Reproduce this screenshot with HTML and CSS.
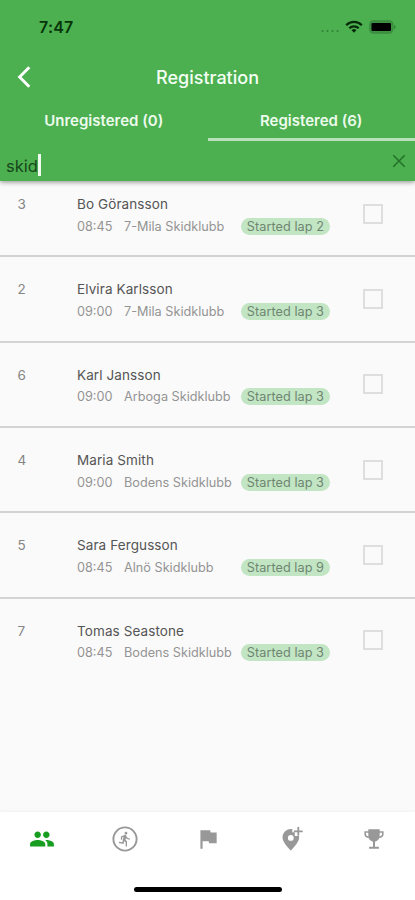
FILE: index.html
```html
<!DOCTYPE html>
<html lang="en">
<head>
<meta charset="utf-8">
<title>Registration</title>
<link rel="stylesheet" href="styles.css">
</head>
<body>
<div class="app">
  <header class="header">
    <div class="status">
      <span class="time">7:47</span>
      <div class="status-icons">
        <svg class="dots" width="20" height="4" viewBox="0 0 20 4"><g fill="#2f8035"><circle cx="2.5" cy="2" r="1"/><circle cx="7.5" cy="2" r="1"/><circle cx="12.5" cy="2" r="1"/><circle cx="17.5" cy="2" r="1"/></g></svg>
        <svg class="wifi" width="18" height="13" viewBox="0 0 18 13"><g fill="none" stroke="#062b09" stroke-width="2.3"><path d="M1.2 5.2a11 11 0 0 1 15.6 0"/><path d="M4.3 8.3a6.6 6.6 0 0 1 9.4 0"/></g><path d="M9 12.7 6.6 10.3a3.4 3.4 0 0 1 4.8 0z" fill="#062b09"/></svg>
        <svg class="battery" width="27" height="14" viewBox="0 0 27 14"><rect x=".8" y=".8" width="23" height="12.4" rx="3.6" fill="#3f9344" stroke="#3a8c3f" stroke-width="1.2"/><rect x="2.5" y="3" width="19.5" height="8" rx="1" fill="#000"/><path d="M25 4.8q1.6.7 1.6 2.2T25 9.2z" fill="#328238"/></svg>
      </div>
    </div>
    <div class="titlebar">
      <svg class="back" width="15" height="22" viewBox="0 0 15 22"><path d="M12.3 1.300 2.600 11l9.700 9.700" fill="none" stroke="#fff" stroke-width="2.9"/></svg>
      <h1 class="title">Registration</h1>
    </div>
    <nav class="tabs">
      <div class="tab"><span>Unregistered (0)</span></div>
      <div class="tab active"><span>Registered (6)</span></div>
    </nav>
    <div class="search">
      <span class="query">skid</span><i class="caret"></i>
      <svg class="clear" width="14" height="14" viewBox="0 0 14 14"><path d="m1.3 1.3 11.4 11.4M12.7 1.3 1.3 12.7" stroke="#237329" stroke-width="1.6"/></svg>
    </div>
  </header>
  <main class="list">
    <article class="row"><span class="num">3</span><div class="info"><div class="name">Bo Göransson</div><div class="meta"><span class="start">08:45</span><span class="club">7-Mila Skidklubb</span><span class="badge">Started lap 2</span></div></div><i class="check"></i></article>
    <article class="row"><span class="num">2</span><div class="info"><div class="name">Elvira Karlsson</div><div class="meta"><span class="start">09:00</span><span class="club">7-Mila Skidklubb</span><span class="badge">Started lap 3</span></div></div><i class="check"></i></article>
    <article class="row"><span class="num">6</span><div class="info"><div class="name">Karl Jansson</div><div class="meta"><span class="start">09:00</span><span class="club">Arboga Skidklubb</span><span class="badge">Started lap 3</span></div></div><i class="check"></i></article>
    <article class="row"><span class="num">4</span><div class="info"><div class="name">Maria Smith</div><div class="meta"><span class="start">09:00</span><span class="club">Bodens Skidklubb</span><span class="badge">Started lap 3</span></div></div><i class="check"></i></article>
    <article class="row"><span class="num">5</span><div class="info"><div class="name">Sara Fergusson</div><div class="meta"><span class="start">08:45</span><span class="club">Alnö Skidklubb</span><span class="badge">Started lap 9</span></div></div><i class="check"></i></article>
    <article class="row"><span class="num">7</span><div class="info"><div class="name">Tomas Seastone</div><div class="meta"><span class="start">08:45</span><span class="club">Bodens Skidklubb</span><span class="badge">Started lap 3</span></div></div><i class="check"></i></article>
  </main>
  <footer class="bottom">
    <nav class="nav">
      <div class="item current"><svg width="26" height="26" viewBox="0 0 24 24" fill="currentColor"><path d="M16 11c1.66 0 2.99-1.34 2.99-3S17.66 5 16 5s-3 1.34-3 3 1.34 3 3 3zm-8 0c1.66 0 2.99-1.34 2.99-3S9.66 5 8 5 5 6.34 5 8s1.340 3 3 3zm0 2c-2.330 0-7 1.170-7 3.500V19h14v-2.500c0-2.330-4.670-3.500-7-3.500zm8 0c-.29 0-.62.02-.97.05 1.160.84 1.970 1.970 1.970 3.450V19h6v-2.500c0-2.330-4.670-3.500-7-3.500z"/></svg></div>
      <div class="item"><svg width="26" height="26" viewBox="0 0 26 26"><circle cx="13" cy="13" r="11.6" fill="none" stroke="currentColor" stroke-width="1.9"/><g transform="translate(4.8 4.8) scale(.68)" fill="currentColor"><path d="M13.490 5.480c1.100 0 2-.9 2-2s-.9-2-2-2-2 .9-2 2 .9 2 2 2zm-3.600 13.900 1-4.400 2.100 2v6h2v-7.500l-2.100-2 .6-3c1.300 1.500 3.300 2.500 5.500 2.500v-2c-1.900 0-3.500-1-4.300-2.400l-1-1.600c-.4-.6-1-1-1.700-1-.3 0-.5.1-.8.1l-5.200 2.200v4.700h2v-3.400l1.800-.7-1.600 8.100-4.900-1-.4 2 7 1.400z"/></g></svg></div>
      <div class="item"><svg width="26" height="26" viewBox="0 0 24 24" fill="currentColor"><path d="M14.400 6 14 4H5v17h2v-7h5.600l.4 2h7V6z"/></svg></div>
      <div class="item"><svg width="26" height="26" viewBox="0 0 26 26"><path fill="currentColor" fill-rule="evenodd" d="M14.300 3.100A8.300 8.300 0 0 0 4.500 11.500C4.500 17 12.800 24.500 12.800 24.500S21.100 17 21.100 11.500L20.900 10H16.800V6.300H14.300zM12.800 9a2.900 2.900 0 1 1 0 5.800 2.900 2.900 0 0 1 0-5.800z"/><path d="M20.300.9v8.800M15.900 5.300h8.800" stroke="currentColor" stroke-width="1.8"/></svg></div>
      <div class="item"><svg width="20" height="20" viewBox="0 0 20 20"><path fill="currentColor" d="M4.300.3h11.400v5.700q0 5.600-4.700 6.700v5h3.900v2H5.100v-2H9v-5Q4.300 11.600 4.300 6z"/><path fill="none" stroke="currentColor" stroke-width="1.6" d="M5 3H1.200v1.900Q1.200 8 5.400 8.300M15 3h3.800v1.900q0 3.100-4.200 3.400"/></svg></div>
    </nav>
    <div class="home"></div>
  </footer>
</div>
</body>
</html>
```
FILE: styles.css
```css
* { box-sizing: border-box; }
body { margin: 0; font-family: Inter, "Liberation Sans", sans-serif; background: #fafafa; }
svg { display: block; }
.app { width: 415px; height: 900px; display: flex; flex-direction: column; overflow: hidden; }

.header { height: 181px; flex: none; background: #4caf50; box-shadow: 0 1px 5px rgba(0,0,0,.45); z-index: 1; display: flex; flex-direction: column; }
.status { height: 54px; display: flex; justify-content: space-between; padding: 18px 19px 0 39px; }
.time { font-size: 16px; line-height: 18px; font-weight: 600; color: #063509; letter-spacing: .2px; }
.status-icons { display: flex; align-items: flex-start; }
.dots { margin: 11px 5px 0 0; }
.wifi { margin: 2px 6px 0 0; }
.battery { margin-top: 2px; }
.titlebar { height: 46px; display: grid; grid-template-columns: 48px 1fr 48px; align-items: center; }
.back { margin-left: 17px; }
.title { margin: 0; padding-top: 1px; text-align: center; font-size: 18px; line-height: 22px; font-weight: 500; color: #f4fff4; }
.tabs { height: 41px; display: flex; }
.tab { flex: 1; display: flex; justify-content: center; padding-top: 11px; font-size: 15px; line-height: 20px; font-weight: 600; color: #edfbed; border-bottom: 3px solid transparent; }
.tab.active { border-bottom-color: #b9dfbb; }
.search { height: 40px; display: flex; align-items: flex-start; padding: 13px 9px 0 6px; }
.query { font-size: 16.500px; line-height: 24px; color: #17481a; }
.caret { width: 3px; height: 22px; background: #effbef; }
.clear { margin: 0 0 0 auto; }

.list { flex: 1; min-height: 0; margin-top: -9px; }
.row { height: 85.350px; display: grid; grid-template-columns: 59.500px 253px 1fr; padding: 23px 0 0 17.500px; border-bottom: 2px solid #d3d3d3; }
.row:last-child { border-bottom: 0; }
.num { font-size: 13.500px; line-height: 18px; color: #858585; }
.name { font-size: 13.500px; line-height: 18px; color: #555; letter-spacing: .1px; }
.meta { display: flex; align-items: center; margin-top: 4px; height: 18px; font-size: 12.700px; color: #949494; }
.start { width: 47px; }
.badge { margin-left: auto; height: 17px; padding: 0 6px; border-radius: 9px; background: #c2e5c4; color: #6f8571; line-height: 17px; letter-spacing: .05px; }
.check { width: 20px; height: 20px; margin: 8.700px 0 0 32.500px; border: 2px solid #dedede; }

.bottom { height: 88px; flex: none; background: #fff; box-shadow: 0 -1px 2px rgba(0,0,0,.04); display: flex; flex-direction: column; align-items: center; }
.nav { width: 415px; height: 53px; display: flex; }
.item { flex: 1; display: flex; align-items: center; justify-content: center; color: #989898; }
.current { color: #179d20; }
.home { width: 148px; height: 5px; margin-top: 22px; border-radius: 3px; background: #000; }
```
